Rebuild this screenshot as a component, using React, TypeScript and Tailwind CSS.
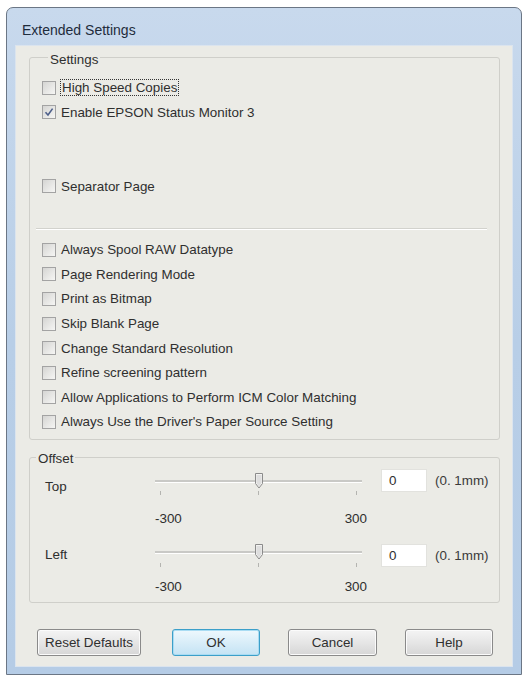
import React from "react";

const upperOptions = [
  { label: "High Speed Copies", checked: false, focused: true },
  { label: "Enable EPSON Status Monitor 3", checked: true, focused: false },
];

const lowerOptions = [
  "Always Spool RAW Datatype",
  "Page Rendering Mode",
  "Print as Bitmap",
  "Skip Blank Page",
  "Change Standard Resolution",
  "Refine screening pattern",
  "Allow Applications to Perform ICM Color Matching",
  "Always Use the Driver's Paper Source Setting",
];

function CheckBox({ checked }: { checked?: boolean }) {
  return (
    <span className="flex h-[14px] w-[14px] shrink-0 items-center justify-center border border-[#a3a3a3] bg-gradient-to-br from-[#d5d5d3] to-[#f6f6f4]">
      {checked && (
        <svg width="10" height="10" viewBox="0 0 10 10">
          <path d="M1.5 5.2 L4 8 L8.6 1.6" fill="none" stroke="#4d5f8a" strokeWidth="1.6" />
        </svg>
      )}
    </span>
  );
}

function OptionRow({ label, checked, focused }: { label: string; checked?: boolean; focused?: boolean }) {
  return (
    <div className="flex h-[24.6px] items-center">
      <CheckBox checked={checked} />
      <span
        className={
          focused
            ? "ml-[4px] border border-dotted border-[#333] px-px leading-[15px]"
            : "ml-[5px] leading-[15px]"
        }
      >
        {label}
      </span>
    </div>
  );
}

function Thumb() {
  return (
    <svg width="10" height="16" viewBox="0 0 10 16">
      <path
        d="M1.5 0.5 H8.5 V10.5 L5 15 L1.5 10.5 Z"
        fill="#f3f3f1"
        stroke="#8b8b8b"
        strokeWidth="1"
      />
      <path d="M2.5 2 H7.5 V10 L5 13.5 L2.5 10 Z" fill="#dedede" />
    </svg>
  );
}

type SliderRowProps = {
  label: string;
  labelPt: string;
  trackPt: string;
  ticksMt: string;
  scaleMt: string;
  className?: string;
};

function SliderRow({ label, labelPt, trackPt, ticksMt, scaleMt, className }: SliderRowProps) {
  return (
    <div className={"flex items-start " + (className ?? "")}>
      <div className={"w-[125px] pl-[15px] leading-[16px] " + labelPt}>{label}</div>
      <div className={"flex w-[212px] flex-col " + trackPt}>
        <div className="relative flex h-[16px] w-[207px] items-center">
          <div className="h-[3px] w-full border-b border-white bg-[#c9c9c6]" />
          <div className="absolute left-[99px] top-0">
            <Thumb />
          </div>
        </div>
        <div className={"flex h-[4px] w-[207px] justify-between px-[5px] " + ticksMt}>
          <span className="w-px bg-[#b4b4b0]" />
          <span className="w-px bg-[#b4b4b0]" />
          <span className="w-px bg-[#b4b4b0]" />
        </div>
        <div className={"flex justify-between leading-[16px] " + scaleMt}>
          <span>-300</span>
          <span>300</span>
        </div>
      </div>
      <div className="ml-[14px] flex h-[23px] w-[46px] items-center border border-[#e2e2de] bg-white pl-[7px]">
        0
      </div>
      <span className="ml-[8px] leading-[23px] text-[#3a3a3a]">(0. 1mm)</span>
    </div>
  );
}

function Button({ label, width, primary }: { label: string; width: string; primary?: boolean }) {
  return (
    <button
      className={
        "flex h-[27px] items-center justify-center rounded-[3px] border " +
        width +
        (primary
          ? " border-[#3c9fc9] bg-gradient-to-b from-[#eef8fd] to-[#c4e3f4] shadow-[inset_0_0_0_1px_#a9dcf3]"
          : " border-[#8a8a8a] bg-gradient-to-b from-[#f4f4f4] via-[#e6e6e6] to-[#d6d6d6] shadow-[inset_0_0_0_1px_#fbfbfb]")
      }
    >
      {label}
    </button>
  );
}

export default function App() {
  return (
    <div
      className="h-[676px] w-[526px] bg-white pl-[6px] pt-[7px] text-[13.4px] text-[#2f2f2f]"
      style={{ fontFamily: '"Liberation Sans", Arial, sans-serif' }}
    >
      <div className="flex h-[668px] w-[516px] flex-col rounded-t-[7px] border border-[#6b7685] bg-gradient-to-b from-[#c8d9ed] via-[#b8cee7] to-[#b5cce6]">
        {/* Title bar */}
        <div className="flex h-[37px] items-center pl-[15px] pt-[7px] text-[14px] text-[#1f2c3c]">
          Extended Settings
        </div>

        {/* Client area */}
        <div className="mx-[8px] mb-[7px] flex flex-1 flex-col border border-[#dbe4ee] bg-[#ebebe6]">
          {/* Settings group */}
          <fieldset className="ml-[13px] mr-[12px] rounded-[3px] border border-[#cfcfca] pb-[5px] pl-[12px] pt-[7.5px]">
            <legend className="ml-[6px] px-[2px] pt-[6px] leading-[16px]">Settings</legend>
            {upperOptions.map((o) => (
              <OptionRow key={o.label} label={o.label} checked={o.checked} focused={o.focused} />
            ))}
            <div className="h-[49.2px]" />
            <OptionRow label="Separator Page" />
            <div className="-ml-[6px] mr-[12px] mt-[30px] border-t border-b border-t-[#d2d2cd] border-b-white" />
            <div className="mt-[7px]">
              {lowerOptions.map((o) => (
                <OptionRow key={o} label={o} />
              ))}
            </div>
          </fieldset>

          {/* Offset group */}
          <fieldset className="ml-[13px] mr-[12px] mt-[7px] rounded-[3px] border border-[#cfcfca] pb-[7px] pt-[2px]">
            <legend className="ml-[6px] px-[2px] pt-[4px] leading-[16px]">Offset</legend>
            <SliderRow label="Top" labelPt="pt-[10px]" trackPt="pt-[4px]" ticksMt="mt-[2px]" scaleMt="mt-[16px]" />
            <SliderRow
              label="Left"
              labelPt="pt-[3px]"
              trackPt="pt-0"
              ticksMt="mt-[3px]"
              scaleMt="mt-[12px]"
              className="mt-[17px]"
            />
          </fieldset>

          {/* Buttons */}
          <div className="mt-[26px] flex pl-[21px]">
            <Button label="Reset Defaults" width="w-[104px]" />
            <div className="ml-[31px]">
              <Button label="OK" width="w-[88px]" primary />
            </div>
            <div className="ml-[28px]">
              <Button label="Cancel" width="w-[89px]" />
            </div>
            <div className="ml-[28px]">
              <Button label="Help" width="w-[88px]" />
            </div>
          </div>
        </div>
      </div>
    </div>
  );
}
